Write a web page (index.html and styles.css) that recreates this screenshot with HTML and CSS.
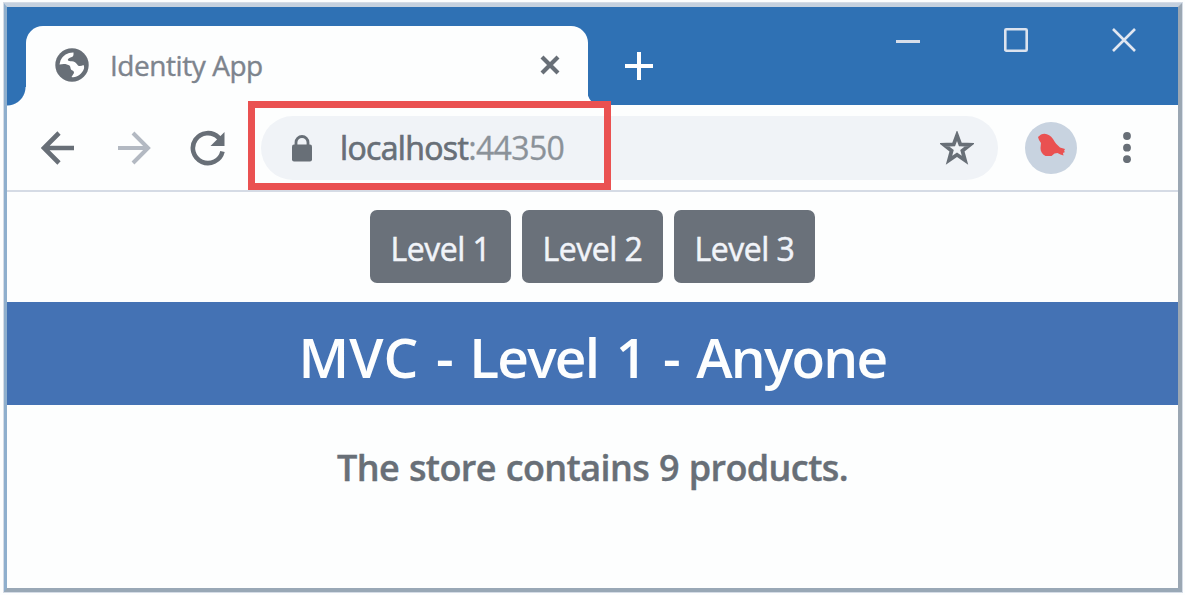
FILE: index.html
```html
<!DOCTYPE html>
<html lang="en">
<head>
<meta charset="utf-8">
<title>Identity App</title>
<link rel="stylesheet" href="styles.css">
</head>
<body>
<div class="window">
  <header class="titlebar">
    <div class="tab">
      <svg class="globe" width="34" height="34" viewBox="0 0 34 34">
        <circle cx="17" cy="17" r="16.700" fill="#686f77"/>
        <path d="M18.500 4.500C13 4.300 8 7 5.500 12.500L4.500 16.500C9 15.500 12 16 14.500 17.500c1.500 1.500.5 3.500 2 4.500 1.500.8 2.500 1 2.500 3l-2.500 4c5 1 10.500-2.500 12.500-8.500.3-1.500 0-2.500-.5-3.500-2 1-4 1.500-5.500.5-1.500-1.500-2-3.500-4.500-4-2-.3-4 0-5.500-1-.8-1.500 1-2.500 2.500-3 2-.5 3-1.500 3-3z" fill="#fff"/>
      </svg>
      <span class="tab-title">Identity App</span>
      <svg class="tab-close" width="20" height="20" viewBox="0 0 20 20"><path d="M2 2l16 16M18 2L2 18" stroke="#686f77" stroke-width="4.200"/></svg>
      <svg class="tab-foot" width="18" height="18" viewBox="0 0 18 18"><path d="M0 0Q0 18 18 18H0z" fill="#fff"/></svg>
    </div>
    <svg class="new-tab" width="28" height="28" viewBox="0 0 28 28"><path d="M14 0v28M0 14h28" stroke="#fff" stroke-width="4"/></svg>
    <div class="controls">
      <svg width="24" height="26" viewBox="0 0 24 26"><path d="M0 14.500h24" stroke="#d7deea" stroke-width="3"/></svg>
      <svg width="24" height="26" viewBox="0 0 24 26"><rect x="1.300" y="2.300" width="21.400" height="21.400" rx="1" fill="none" stroke="#dce3ee" stroke-width="2.600"/></svg>
      <svg width="24" height="26" viewBox="0 0 24 26"><path d="M1 2l22 22M23 2L1 24" stroke="#e1e7f1" stroke-width="2.600"/></svg>
    </div>
  </header>
  <nav class="toolbar">
    <svg class="back" width="34" height="34" viewBox="0 0 34 34"><path d="M33 17H3M18 2L3 17l15 15" fill="none" stroke="#686f77" stroke-width="4.600"/></svg>
    <svg class="forward" width="34" height="34" viewBox="0 0 34 34"><path d="M1 17h30M16 2l15 15-15 15" fill="none" stroke="#b3b9c2" stroke-width="4"/></svg>
    <svg class="reload" width="36" height="36" viewBox="0 0 36 36"><path d="M32.500 21.500A15 15 0 1 1 28.500 7.500L31 10" fill="none" stroke="#686f77" stroke-width="4.600"/><path d="M34.500 2v14H20.500z" fill="#686f77"/></svg>
    <div class="address">
      <svg class="lock" width="20" height="28" viewBox="0 0 20 28"><path d="M4 12V8.500a6 6 0 0 1 12 0V12" fill="none" stroke="#686f77" stroke-width="2.800"/><rect y="10.500" width="20" height="17" rx="2" fill="#686f77"/></svg>
      <span class="url">localhost<span class="port">:44350</span></span>
      <svg class="star" width="34" height="34" viewBox="0 0 34 34"><path d="M17 4.500l3.300 9 9.700.3-7.600 6 2.600 9.400-8-5.400-8 5.400 2.600-9.400-7.600-6 9.700-.3z" fill="none" stroke="#686f77" stroke-width="3.800"/></svg>
    </div>
    <div class="avatar">
      <svg width="28" height="24" viewBox="0 0 28 24"><path d="M0 4L3 1.500C8-.5 12 2 15 6c2 3.500 4 6 7 8.500l5 1.500-1 2 1 1-2 1 .5 2.500-3-1-3-1.500-3 .5-3 2.500H7.500C4 21 2.500 18.500 2.500 15L3 10 1 7z" fill="#ea5151"/></svg>
    </div>
    <svg class="menu" width="8" height="31" viewBox="0 0 8 31"><g fill="#686f77"><circle cx="4" cy="4" r="3.900"/><circle cx="4" cy="15.700" r="3.900"/><circle cx="4" cy="27.200" r="3.900"/></g></svg>
    <div class="highlight"></div>
  </nav>
  <main>
    <div class="levels">
      <a class="btn">Level 1</a>
      <a class="btn">Level 2</a>
      <a class="btn">Level 3</a>
    </div>
    <h1 class="banner"><span class="wide">MVC</span> - Level 1 - Anyone</h1>
    <p class="message">The store contains 9 products.</p>
  </main>
</div>
</body>
</html>
```
FILE: styles.css
```css
* { box-sizing: border-box; }
body {
  margin: 0;
  padding: 2px 2px 2px 3px;
  height: 595px;
  overflow: hidden;
  background: #fdfefe;
  font-family: "Open Sans", "Noto Sans", sans-serif;
  color: #686f77;
}
svg { display: block; flex: none; }
.window {
  height: 591px;
  border: 4px solid #8fafcd;
  border-top: 5px solid #c5d1df;
  border-right: 5px solid #9ba7b3;
  border-bottom: 5px solid #99a8b6;
  outline: 1px solid #d5dce6;
  outline-offset: -1px;
  background: #fdfefe;
}
.titlebar {
  display: flex;
  height: 98px;
  background: #2f71b4;
}
.tab {
  position: relative;
  display: flex;
  align-items: center;
  width: 562px;
  height: 80px;
  margin: 18.5px 0 0 19px;
  padding: 0 28px 1px 29px;
  background: #fdfefe;
  border-radius: 17px 17px 0 0;
}
.tab::before {
  content: "";
  position: absolute;
  left: -19px;
  bottom: 0;
  width: 19px;
  height: 19px;
  background: radial-gradient(circle at 0 0, #2f71b4 18px, #fdfefe 19px);
}
.tab-foot { position: absolute; left: 561px; bottom: 0; }
.tab-title {
  margin-left: 21px;
  flex: 1;
  font-size: 28px;
  line-height: 40px;
  letter-spacing: -0.45px;
  color: #7d848d;
  -webkit-text-stroke: 0.4px;
  white-space: nowrap;
}
.new-tab { margin: 45px 0 0 37px; }
.controls {
  display: flex;
  gap: 84px;
  margin: 20px 42px 0 auto;
}
.toolbar {
  position: relative;
  display: flex;
  align-items: center;
  height: 87px;
  border-bottom: 2px solid #d5dbe5;
}
.back { margin-left: 34px; }
.forward { margin-left: 42px; }
.reload { margin-left: 39px; }
.address {
  display: flex;
  align-items: center;
  width: 737px;
  height: 64px;
  margin-left: 35px;
  padding: 0 24px 0 31px;
  background: #f0f3f7;
  border-radius: 32px;
}
.url {
  flex: 1;
  margin-left: 28px;
  padding-top: 1px;
  font-size: 32px;
  line-height: 44px;
  letter-spacing: -0.65px;
  -webkit-text-stroke: 0.7px;
  white-space: nowrap;
}
.port { color: #8b9299; -webkit-text-stroke: 0.3px; }
.avatar {
  display: flex;
  align-items: center;
  justify-content: center;
  width: 52px;
  height: 52px;
  margin-left: 27px;
  padding: 0 0 5px 2px;
  border-radius: 50%;
  background: #c8d3e0;
}
.menu { margin-left: 46px; }
.highlight {
  position: absolute;
  left: 241px;
  top: -4px;
  width: 363px;
  height: 89px;
  border: 7.5px solid #ea5151;
}
.levels {
  display: flex;
  justify-content: center;
  gap: 11px;
  height: 110px;
  padding-top: 18px;
}
.btn {
  width: 141px;
  height: 73px;
  border-radius: 7px;
  background: #6a717a;
  color: #f1f4f9;
  font-size: 32px;
  line-height: 77px;
  letter-spacing: -0.5px;
  -webkit-text-stroke: 0.5px;
  text-align: center;
  white-space: nowrap;
}
.banner {
  margin: 0;
  height: 103px;
  background: #4472b4;
  color: #fdfefe;
  font-size: 55px;
  font-weight: 600;
  line-height: 110px;
  letter-spacing: -1.8px;
  word-spacing: 5px;
  text-align: center;
  white-space: nowrap;
}
.wide { letter-spacing: 0; }
.message {
  margin: 37px 0 0;
  font-size: 36px;
  font-weight: 600;
  line-height: 51px;
  letter-spacing: -0.6px;
  word-spacing: 1px;
  -webkit-text-stroke: 0.4px;
  text-align: center;
  white-space: nowrap;
}
```
